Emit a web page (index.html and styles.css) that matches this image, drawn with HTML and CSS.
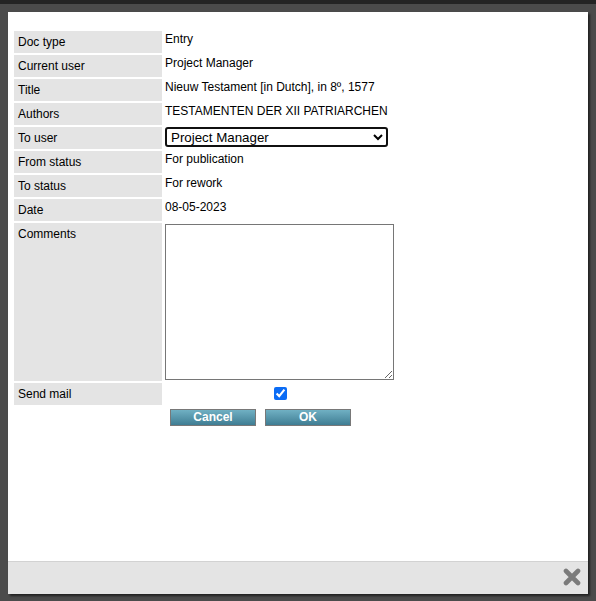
FILE: index.html
```html
<!DOCTYPE html>
<html>
<head>
<meta charset="utf-8">
<title>Change status</title>
<link rel="stylesheet" href="styles.css">
</head>
<body>
<div class="topbar"></div>
<div class="dialog">
  <div class="dialog-body">
    <table class="form">
      <tr><td class="lbl">Doc type</td><td class="val">Entry</td></tr>
      <tr><td class="lbl">Current user</td><td class="val">Project Manager</td></tr>
      <tr><td class="lbl">Title</td><td class="val">Nieuw Testament [in Dutch], in 8º, 1577</td></tr>
      <tr><td class="lbl">Authors</td><td class="val">TESTAMENTEN DER XII PATRIARCHEN</td></tr>
      <tr><td class="lbl">To user</td><td class="val">
        <select class="user-select"><option>Project Manager</option></select>
      </td></tr>
      <tr><td class="lbl">From status</td><td class="val">For publication</td></tr>
      <tr><td class="lbl">To status</td><td class="val">For rework</td></tr>
      <tr><td class="lbl">Date</td><td class="val">08-05-2023</td></tr>
      <tr><td class="lbl">Comments</td><td class="val"><textarea class="comments"></textarea></td></tr>
      <tr><td class="lbl">Send mail</td><td class="val center"><input type="checkbox" class="mail-check" checked></td></tr>
    </table>
    <div class="actions">
      <button class="btn">Cancel</button>
      <button class="btn">OK</button>
    </div>
  </div>
  <div class="dialog-footer">
    <svg class="close" width="18" height="18" viewBox="0 0 18 18">
      <path d="M3 3 L15 15 M15 3 L3 15" stroke="#7b7b7b" stroke-width="4.6" stroke-linecap="round"/>
    </svg>
  </div>
</div>
</body>
</html>
```

FILE: styles.css
```css
html, body {
  margin: 0;
  padding: 0;
  height: 100%;
}

body {
  background: #4b4b4b;
  font-family: "Liberation Sans", Arial, sans-serif;
  font-size: 12px;
  color: #000;
  overflow: hidden;
}

.topbar {
  height: 4px;
  background: #242424;
}

.dialog {
  margin: 8px 0 0 8px;
  width: 580px;
  height: 582px;
  background: #fff;
  display: flex;
  flex-direction: column;
  box-shadow: 2px 2px 2px rgba(0, 0, 0, 0.55);
}

.dialog-body {
  flex: 1;
  padding: 17px 4px 0 4px;
}

.form {
  border-collapse: separate;
  border-spacing: 2px;
  width: 386px;
}

.lbl {
  width: 140px;
  padding: 4px;
  line-height: 14px;
  background: #e4e4e4;
  vertical-align: top;
}

.val {
  width: 230px;
  padding: 1px;
  line-height: 14px;
  vertical-align: top;
}

.val.center {
  text-align: center;
}

.user-select {
  display: block;
  margin: -1px 0 0 0;
  width: 223px;
  height: 20px;
  padding: 0 0 0 0;
  border: 2px solid #101010;
  border-radius: 3px;
  background: #fff;
  font-family: "Liberation Sans", Arial, sans-serif;
  font-size: 13.33px;
  color: #000;
}

.comments {
  display: block;
  margin: 0;
  width: 229px;
  height: 156px;
  box-sizing: border-box;
  border: 1px solid #767676;
  padding: 2px;
  resize: both;
}

.mail-check {
  width: 13px;
  height: 13px;
  margin: 3px 3px 3px 4px;
  vertical-align: top;
  accent-color: #0b6cf5;
}

.actions {
  display: flex;
  gap: 9px;
  padding-left: 158px;
  margin-top: 2px;
}

.btn {
  width: 86px;
  height: 17px;
  box-sizing: border-box;
  padding: 0;
  border: 1px solid #787878;
  background: linear-gradient(to bottom, #70b0c3, #3f7d93);
  color: #fff;
  font-family: "Liberation Sans", Arial, sans-serif;
  font-weight: bold;
  font-size: 12px;
  line-height: 15px;
}

.dialog-footer {
  height: 32px;
  background: #e4e4e4;
  border-top: 1px solid #d2d2d2;
  display: flex;
  justify-content: flex-end;
  align-items: flex-start;
  padding-right: 7px;
}

.close {
  margin-top: 6px;
}
```
